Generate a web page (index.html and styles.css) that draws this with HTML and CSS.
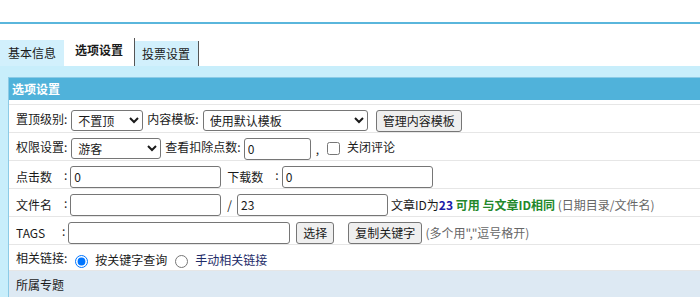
FILE: index.html
```html
<!DOCTYPE html>
<html>
<head>
    <title>选项设置</title>
    <link rel="stylesheet" href="styles.css">
</head>
<body>
    <div class="topbar"></div>

    <ul class="tabs">
        <li>基本信息</li>
        <li class="active">选项设置</li>
        <li class="last">投票设置</li>
    </ul>

    <div class="main">
        <div class="panel">
            <div class="panel-head">选项设置</div>
            <div class="rows">
                <div class="row">
                    置顶级别:<select class="sel-top"><option>不置顶</option></select>内容模板:<select class="sel-tpl"><option>使用默认模板</option></select><button class="btn btn-tpl">管理内容模板</button>
                </div>
                <div class="row">
                    权限设置:<select class="sel-auth"><option>游客</option></select>查看扣除点数:<input class="inp-point" type="text" value="0"><span class="comma">,</span><input type="checkbox" class="chk">关闭评论
                </div>
                <div class="row">
                    <span class="lbl">点击数</span>:<input class="inp-mid" type="text" value="0"><span class="lbl lbl-gap">下载数</span>:<input class="inp-mid" type="text" value="0">
                </div>
                <div class="row">
                    <span class="lbl">文件名</span>:<input class="inp-mid" type="text" value=""><span class="slash">/</span><input class="inp-mid" type="text" value="23"><span>文章ID为<b class="blue">23</b> <b class="green">可用 与文章ID相同</b> <span class="grey">(日期目录/文件名)</span></span>
                </div>
                <div class="row">
                    <span class="lbl lbl-tags">TAGS</span>:<input class="inp-tags" type="text" value=""><button class="btn">选择</button><button class="btn btn-copy">复制关键字</button><span class="grey">(多个用","逗号格开)</span>
                </div>
                <div class="row row-last">
                    相关链接:<label><input type="radio" name="rel" checked>按关键字查询</label><label class="navy"><input type="radio" name="rel">手动相关链接</label>
                </div>
                <div class="row row-sub">所属专题</div>
            </div>
        </div>
    </div>
</body>
</html>
```

FILE: styles.css
```css
body {
    margin: 0;
    background: #fff;
    font-family: "Microsoft YaHei", "Noto Sans CJK SC", sans-serif;
    font-size: 12px;
    color: #1a1a1a;
}
.topbar {
    height: 22px;
    border-bottom: 2px solid #5ab6dc;
}
.tabs {
    list-style: none;
    margin: 14px 0 0 0;
    padding: 0;
    display: flex;
    align-items: flex-end;
    height: 28px;
}
.tabs li {
    height: 26px;
    line-height: 26px;
    padding: 0 8px;
    background: #d2f0fc;
    font-size: 12px;
}
.tabs li.active {
    height: 28px;
    line-height: 24px;
    padding: 0 11px;
    background: #fff;
    font-weight: bold;
    border-right: 1px solid #555;
}
.tabs li.last {
    height: 25px;
    padding: 0 8px 0 7px;
    border-right: 1px solid #555;
}
.main {
    background: #c8eefb;
    padding: 11px 0 0 8px;
}
.panel {
    border: 1px solid #8ccbe6;
    border-right: none;
    border-bottom: none;
    background: #fff;
}
.panel-head {
    height: 22px;
    line-height: 22px;
    background: #50b2da;
    color: #fff;
    font-weight: bold;
    padding-left: 3px;
    border-bottom: 1px solid #fff;
}
.rows {
    padding-top: 3px;
}
.row {
    height: 27px;
    line-height: 27px;
    padding-left: 7px;
    border-top: 1px solid #e6e6e6;
    white-space: nowrap;
}
.row > * {
    vertical-align: middle;
}
.row-last {
    height: 25px;
    line-height: 25px;
}
.row-sub {
    background: #dde9f3;
    height: 26px;
}
.lbl {
    display: inline-block;
    width: 48px;
}
.lbl-tags { width: 46px; }
select, input[type=text], .btn {
    font-family: "Microsoft YaHei", "Noto Sans CJK SC", sans-serif;
    font-size: 12px;
    color: #1a1a1a;
    box-sizing: border-box;
    vertical-align: middle;
}
select {
    height: 21px;
    margin: 0 4px 0 4px;
    padding: 0 2px;
    border: 1px solid #767676;
    border-radius: 3px;
    background: #fff;
}
.sel-top { width: 72px; }
.sel-tpl { width: 165px; }
.sel-auth { width: 90px; }
input[type=text] {
    height: 22px;
    margin: 0 3px;
    padding: 0 3px;
    border: 1px solid #767676;
    border-radius: 3px;
}
.inp-point { width: 67px; }
.inp-mid { width: 151px; }
.inp-tags { width: 222px; margin-left: 2px; }
.btn {
    height: 22px;
    line-height: 18px;
    padding: 0 6px;
    margin: 0 3px;
    border: 1px solid #767676;
    border-radius: 3px;
    background: #efefef;
}
.btn-tpl { margin-left: 4px; }
.btn-copy { margin-left: 11px; }
.comma { margin: 0 7px 0 2px; }
.chk {
    margin: 0 7px 0 1px;
    vertical-align: middle;
}
.lbl-gap { margin-left: 3px; }
.slash { margin: 0 2px 0 3px; }
.blue { color: #1a1aa8; }
.green { color: #23882b; }
.grey { color: #666; }
.navy { color: #1e2c68; }
label {
    margin-left: 4px;
}
input[type=radio] {
    margin: 0 7px 0 4px;
    vertical-align: middle;
}
```
